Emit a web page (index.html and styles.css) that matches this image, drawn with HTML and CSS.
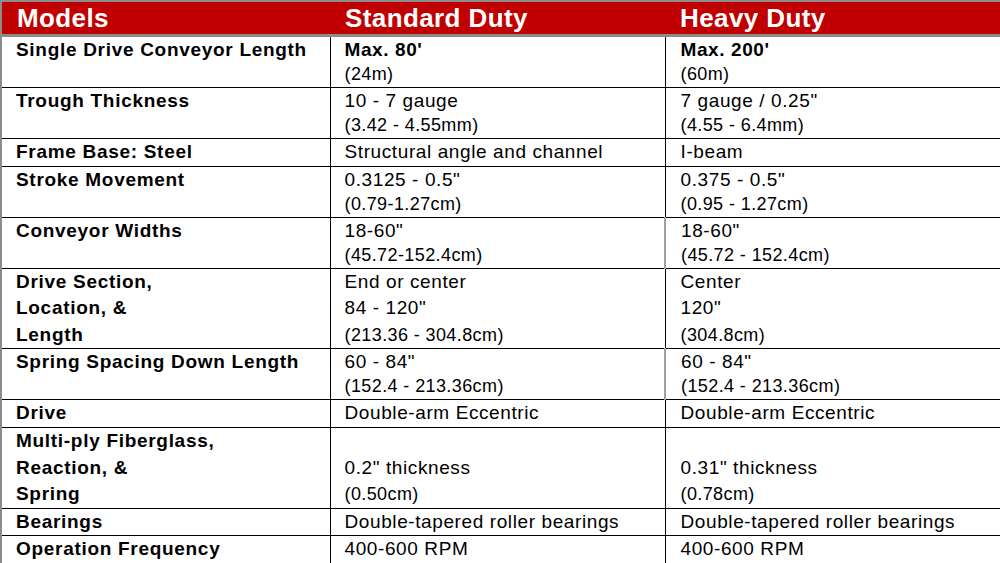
FILE: index.html
```html
<!DOCTYPE html>
<html>
<head>
<meta charset="utf-8">
<link rel="stylesheet" href="styles.css">
</head>
<body>
<table class="spec">
  <colgroup>
    <col class="c-label">
    <col class="c-std">
    <col class="c-heavy">
  </colgroup>
  <thead>
    <tr class="head">
      <th>Models</th>
      <th>Standard Duty</th>
      <th>Heavy Duty</th>
    </tr>
  </thead>
  <tbody>
    <tr class="r2">
      <td class="label">Single Drive Conveyor Length</td>
      <td><b>Max. 80'</b><span class="sub">(24m)</span></td>
      <td><b>Max. 200'</b><span class="sub">(60m)</span></td>
    </tr>
    <tr class="r2">
      <td class="label">Trough Thickness</td>
      <td>10 - 7 gauge<span class="sub">(3.42 - 4.55mm)</span></td>
      <td>7 gauge / 0.25"<span class="sub">(4.55 - 6.4mm)</span></td>
    </tr>
    <tr class="r1">
      <td class="label">Frame Base: Steel</td>
      <td>Structural angle and channel</td>
      <td>I-beam</td>
    </tr>
    <tr class="r2">
      <td class="label">Stroke Movement</td>
      <td>0.3125 - 0.5"<span class="sub">(0.79-1.27cm)</span></td>
      <td>0.375 - 0.5"<span class="sub">(0.95 - 1.27cm)</span></td>
    </tr>
    <tr class="r2">
      <td class="label">Conveyor Widths</td>
      <td>18-60"<span class="sub">(45.72-152.4cm)</span></td>
      <td class="grey-edge">18-60"<span class="sub">(45.72 - 152.4cm)</span></td>
    </tr>
    <tr class="r3">
      <td class="label">Drive Section,<br>Location, &amp;<br>Length</td>
      <td>End or center<br>84 - 120"<span class="sub">(213.36 - 304.8cm)</span></td>
      <td>Center<br>120"<span class="sub">(304.8cm)</span></td>
    </tr>
    <tr class="r2">
      <td class="label">Spring Spacing Down Length</td>
      <td>60 - 84"<span class="sub">(152.4 - 213.36cm)</span></td>
      <td class="grey-edge">60 - 84"<span class="sub">(152.4 - 213.36cm)</span></td>
    </tr>
    <tr class="r1">
      <td class="label">Drive</td>
      <td>Double-arm Eccentric</td>
      <td>Double-arm Eccentric</td>
    </tr>
    <tr class="r3">
      <td class="label">Multi-ply Fiberglass,<br>Reaction, &amp;<br>Spring</td>
      <td class="bottom">0.2" thickness<span class="sub">(0.50cm)</span></td>
      <td class="bottom">0.31" thickness<span class="sub">(0.78cm)</span></td>
    </tr>
    <tr class="r1">
      <td class="label">Bearings</td>
      <td>Double-tapered roller bearings</td>
      <td>Double-tapered roller bearings</td>
    </tr>
    <tr class="r1">
      <td class="label">Operation Frequency</td>
      <td>400-600 RPM</td>
      <td>400-600 RPM</td>
    </tr>
  </tbody>
</table>
</body>
</html>
```
FILE: styles.css
```css
html, body {
  margin: 0;
  padding: 0;
  background: #ffffff;
}

.spec {
  width: 1000px;
  border-collapse: collapse;
  table-layout: fixed;
  font-family: "Liberation Sans", Arial, sans-serif;
  color: #000;
  border: 2px solid #8c8c8c;
}

.c-label { width: 329px; }
.c-std { width: 335px; }
.c-heavy { width: 336px; }

.head th {
  background: #c00000;
  color: #fff;
  font-size: 26px;
  font-weight: bold;
  letter-spacing: 0.4px;
  text-align: left;
  height: 32px;
  padding: 0 0 0 15px;
  line-height: 32px;
  border-bottom: 3px solid #8c8c8c;
}

.spec td {
  border: 1px solid #000;
  padding: 0 0 0 14px;
  font-size: 19px;
  letter-spacing: 0.6px;
  line-height: 25px;
  vertical-align: top;
  white-space: nowrap;
}

.r1 td { line-height: 26.8px; }
.r2 td { line-height: 25px; }
.r3 td { line-height: 26.5px; }

.spec td:first-child {
  border-left: 2px solid #8c8c8c;
}
.spec td:last-child {
  border-right: 2px solid #8c8c8c;
  padding-left: 15px;
}

.spec td.label {
  font-weight: bold;
  letter-spacing: 0.7px;
}

.sub {
  display: block;
  font-size: 18px;
  letter-spacing: 0.4px;
}

.spec td.bottom {
  vertical-align: bottom;
}

.spec td.grey-edge {
  border-left: 2px solid #a0a0a0;
}
```
